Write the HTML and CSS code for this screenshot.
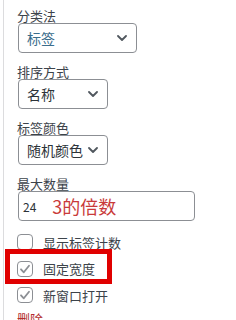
FILE: index.html
```html
<!DOCTYPE html>
<html lang="zh">
<head>
<meta charset="utf-8">
<link rel="stylesheet" href="styles.css">
</head>
<body>
<div class="panel">
  <div class="field first">
    <div class="label">分类法</div>
    <div class="select wide active"><span>标签</span><svg class="chev" width="10" height="6" viewBox="0 0 10 6"><path d="M1 1l4 4 4-4"/></svg></div>
  </div>
  <div class="field">
    <div class="label">排序方式</div>
    <div class="select narrow"><span>名称</span><svg class="chev" width="10" height="6" viewBox="0 0 10 6"><path d="M1 1l4 4 4-4"/></svg></div>
  </div>
  <div class="field">
    <div class="label">标签颜色</div>
    <div class="select narrow"><span>随机颜色</span><svg class="chev" width="10" height="6" viewBox="0 0 10 6"><path d="M1 1l4 4 4-4"/></svg></div>
  </div>
  <div class="field">
    <div class="label">最大数量</div>
    <div class="input"><span class="val">24</span><span class="note">3的倍数</span></div>
  </div>
  <div class="checks">
    <div class="check"><span class="box"></span><span class="ctext">显示标签计数</span></div>
    <div class="check"><span class="box"><svg width="16" height="16" viewBox="0 0 16 16"><path d="M4 8.3l2.8 3L12 4.8"/></svg></span><span class="ctext">固定宽度</span></div>
    <div class="check"><span class="box"><svg width="16" height="16" viewBox="0 0 16 16"><path d="M4 8.3l2.8 3L12 4.8"/></svg></span><span class="ctext">新窗口打开</span></div>
  </div>
  <div class="delete">删除</div>
  <div class="highlight"></div>
</div>
</body>
</html>
```
FILE: styles.css
```css
html, body {
  margin: 0;
  padding: 0;
  background: #fff;
  overflow: hidden;
}
body {
  font-family: "Noto Sans CJK SC", "Noto Sans", sans-serif;
  color: #3c434a;
  width: 236px;
  height: 320px;
}
.panel {
  position: relative;
  margin-left: 3px;
  border-left: 1px solid #dcdcde;
  height: 320px;
  box-sizing: border-box;
  padding: 9px 0 0 14px;
}
.field {
  margin-top: 12px;
}
.field.first {
  margin-top: 0;
}
.label {
  font-size: 13px;
  line-height: 14px;
  height: 14px;
  margin-left: -1px;
  color: #3c434a;
}
.select, .input {
  box-sizing: border-box;
  height: 30px;
  border: 1px solid #8c8f94;
  border-radius: 4px;
  display: flex;
  align-items: center;
  background: #fff;
}
.select {
  padding: 0 9px 0 8px;
  justify-content: space-between;
  font-size: 14px;
  color: #2c3338;
}
.select.wide { width: 119px; }
.select.narrow { width: 90px; }
.select.active span { color: #3a6d8c; }
.chev path {
  fill: none;
  stroke: #50575e;
  stroke-width: 1.8;
  stroke-linecap: round;
  stroke-linejoin: round;
}
.input {
  width: 177px;
  padding-left: 4px;
}
.val {
  font-size: 12px;
  color: #2c3338;
}
.note {
  margin-left: 16px;
  font-size: 18px;
  color: #c93a3a;
  line-height: 20px;
}
.checks {
  margin-top: 13px;
  display: flex;
  flex-direction: column;
  gap: 10.5px;
}
.check {
  display: flex;
  align-items: center;
  height: 16px;
  margin-left: -1px;
}
.box {
  width: 16px;
  height: 16px;
  box-sizing: border-box;
  border: 1px solid #8c8f94;
  border-radius: 4px;
  position: relative;
  flex: none;
}
.box svg {
  position: absolute;
  left: -1px;
  top: -1px;
}
.box path {
  fill: none;
  stroke: #8c8f94;
  stroke-width: 1.8;
  stroke-linecap: round;
  stroke-linejoin: round;
}
.ctext {
  margin-left: 10px;
  font-size: 13px;
  color: #3c434a;
}
.delete {
  margin-top: 8px;
  margin-left: -1px;
  font-size: 13px;
  line-height: 16px;
  color: #b32d2e;
  text-decoration: underline;
}
.highlight {
  position: absolute;
  left: 1px;
  top: 249px;
  width: 107px;
  height: 35px;
  box-sizing: border-box;
  border: 5px solid #e00000;
}
```
